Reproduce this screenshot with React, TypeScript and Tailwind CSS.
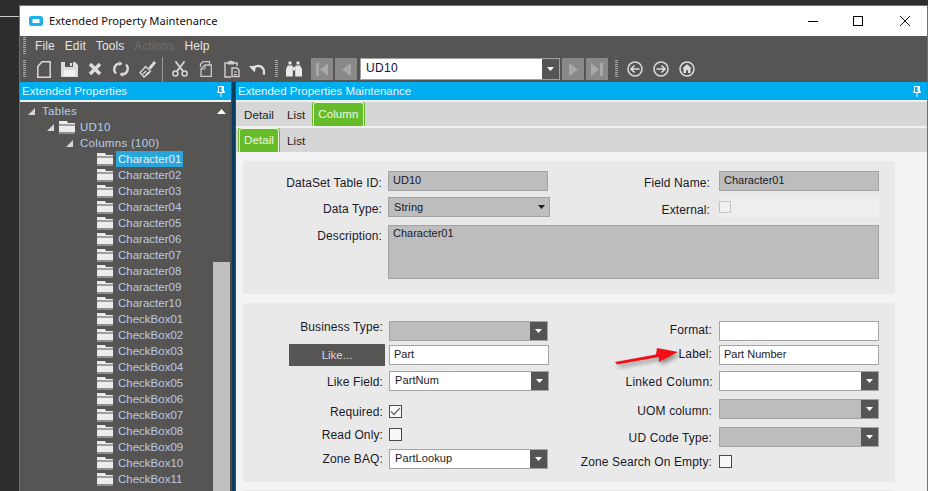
import type { ReactNode } from "react";

const treeItems = [
  "Character02", "Character03", "Character04", "Character05", "Character06",
  "Character07", "Character08", "Character09", "Character10", "CheckBox01",
  "CheckBox02", "CheckBox03", "CheckBox04", "CheckBox05", "CheckBox06",
  "CheckBox07", "CheckBox08", "CheckBox09", "CheckBox10", "CheckBox11",
];

const Grip = () => (
  <div className="w-[3px] h-[18px] bg-[repeating-linear-gradient(to_bottom,#a8a8a6_0,#a8a8a6_1px,transparent_1px,transparent_2px)]" />
);

const Folder = () => (
  <svg width="16" height="13" viewBox="0 0 16 13" className="shrink-0">
    <path d="M0 0h8l1 2h7v1.5H0z" fill="#ececec" />
    <path d="M0 4.5h16V11H0z" fill="#ececec" />
    <path d="M0 11h16v2H0z" fill="#8f8f8d" />
  </svg>
);

const Expander = () => (
  <svg width="7" height="7" viewBox="0 0 7 7" className="shrink-0">
    <path d="M7 0v7H0z" fill="#d6d6d6" />
  </svg>
);

const Pin = () => (
  <svg width="8" height="11" viewBox="0 0 8 11">
    <path d="M1.5 0.5h5v5h1v1h-7v-1h1z" fill="none" stroke="#fff" />
    <path d="M4.5 0.5h2v5h-2z" fill="#fff" />
    <path d="M3.5 7h1v4h-1z" fill="#fff" />
  </svg>
);

const Caret = ({ color = "#fff" }: { color?: string }) => (
  <svg width="7" height="4" viewBox="0 0 7 4">
    <path d="M0 0h7L3.5 4z" fill={color} />
  </svg>
);

const DropButton = () => (
  <div className="w-[17px] self-stretch bg-[#575553] flex items-center justify-center shrink-0">
    <Caret />
  </div>
);

const NavSquare = ({ children }: { children: ReactNode }) => (
  <div className="w-[22px] h-[22px] bg-[#8a8987] flex items-center justify-center">{children}</div>
);

const Toolbar = () => (
  <div className="h-[26px] flex items-center pl-[3px]">
    <Grip />
    <svg className="ml-[11px]" width="14" height="17" viewBox="0 0 14 17">
      <path d="M5 0.8H13.2V16.2H0.8V5.5z" fill="none" stroke="#d8d8d8" strokeWidth="1.5" />
    </svg>
    <svg className="ml-[10px]" width="17" height="16" viewBox="0 0 17 16">
      <path d="M0 1h14l3 3v12H0z" fill="#dcdcdc" />
      <path d="M4 1h8v5H4z" fill="#575553" />
      <path d="M9 2h2v3H9z" fill="#dcdcdc" />
      <path d="M3 9h11v6H3z" fill="#f2f2f2" />
    </svg>
    <svg className="ml-[10px]" width="14" height="14" viewBox="0 0 14 14">
      <path d="M2 2l10 10M12 2L2 12" stroke="#dcdcdc" strokeWidth="3.6" />
    </svg>
    <svg className="ml-[11px]" width="16" height="16" viewBox="0 0 16 16" fill="none" stroke="#dcdcdc" strokeWidth="2.4">
      <path d="M3 12.5A6 6 0 0 1 6 2.4" />
      <path d="M13 3.5A6 6 0 0 1 10 13.6" />
      <path d="M6.5 0l3 3-3.5 2zM9.5 16l-3-3 3.5-2z" fill="#dcdcdc" stroke="none" />
    </svg>
    <svg className="ml-[10px]" width="17" height="17" viewBox="0 0 17 17" fill="none" stroke="#dcdcdc" strokeWidth="1.3">
      <path d="M10 7l5-6 1.2 1-5 6" fill="#dcdcdc" />
      <path d="M6.5 5.5L11.5 10l-1.5 2-5 4-4-4.5 3.5-3.5z" />
      <path d="M4 13l3-3M6.5 14.5l3-3.5" />
    </svg>
    <div className="ml-[6px] mr-[9px] w-px h-[25px] bg-[#9a9997]" />
    <svg width="16" height="16" viewBox="0 0 16 16" fill="none" stroke="#d4d4d4" strokeWidth="1.5">
      <circle cx="3.4" cy="12.4" r="2.5" />
      <circle cx="12.6" cy="12.4" r="2.5" />
      <path d="M4.8 10.4L12.5 0.5M11.2 10.4L3.5 0.5" strokeWidth="1.8" />
    </svg>
    <svg className="ml-[10px]" width="14" height="16" viewBox="0 0 14 16" fill="none" stroke="#c8c8c8" strokeWidth="1.3">
      <path d="M2.5 6V3.2L5 0.7h6.5V4" />
      <path d="M7 4h6.3v11.3H3V8z" />
      <path d="M7 4.2V8H3.2" strokeWidth="1" />
    </svg>
    <svg className="ml-[12px]" width="16" height="18" viewBox="0 0 16 18" fill="none" stroke="#d0d0d0" strokeWidth="1.4">
      <path d="M4 3H1v14h6" />
      <path d="M10 3h3v3" />
      <path d="M4 1.2h2l.5-.7h1l.5.7h2V4.5H4z" fill="#d0d0d0" stroke="none" />
      <path d="M8 8h5l2 2v6.5H8z" fill="#575553" />
      <path d="M10 12h3M10 14.5h3" strokeWidth="1.2" />
    </svg>
    <svg className="ml-[9px]" width="16" height="13" viewBox="0 0 16 13" fill="none" stroke="#e0e0e0" strokeWidth="2.4">
      <path d="M3.5 6.5A6 6 0 0 1 14.6 11.5" />
      <path d="M0 3l7 0-1.2 6.5z" fill="#e0e0e0" stroke="none" />
    </svg>
    <div className="ml-[10px]"><Grip /></div>
    <svg className="ml-[8px]" width="16" height="16" viewBox="0 0 16 16" fill="#e8e8e8">
      <path d="M2.5 0.5h3v3h-3zM10.5 0.5h3v3h-3z" />
      <path d="M1.8 4.5h5V15.5H0V8zM9.2 4.5h5L16 8v7.5H9.2z" />
      <path d="M7 6h2v3.5H7z" />
    </svg>
    <div className="ml-[9px] flex gap-[2px]">
      <NavSquare>
        <svg width="12" height="13" viewBox="0 0 12 13"><path d="M0 0h3v13H0zM12 0v13L4 6.5z" fill="#a9a8a6" /></svg>
      </NavSquare>
      <NavSquare>
        <svg width="9" height="13" viewBox="0 0 9 13"><path d="M9 0v13L0 6.5z" fill="#a9a8a6" /></svg>
      </NavSquare>
    </div>
    <div className="ml-[3px] w-[200px] h-[22px] bg-white border border-[#a0a0a0] flex items-stretch">
      <div className="flex-1 pl-[5px] text-[12px] leading-[19px] tracking-[0.3px] text-[#101040]">UD10</div>
      <DropButton />
    </div>
    <div className="ml-[2px] flex gap-[2px]">
      <NavSquare>
        <svg width="9" height="13" viewBox="0 0 9 13"><path d="M0 0v13l9-6.5z" fill="#a9a8a6" /></svg>
      </NavSquare>
      <NavSquare>
        <svg width="12" height="13" viewBox="0 0 12 13"><path d="M9 0h3v13H9zM0 0v13l8-6.5z" fill="#a9a8a6" /></svg>
      </NavSquare>
    </div>
    <div className="ml-[7px]"><Grip /></div>
    <svg className="ml-[9px]" width="16" height="16" viewBox="0 0 16 16" fill="none" stroke="#dedede" strokeWidth="1.5">
      <circle cx="8" cy="8" r="7" />
      <path d="M7.5 4.5L4 8l3.5 3.5M4 8h8.5" />
    </svg>
    <svg className="ml-[10px]" width="16" height="16" viewBox="0 0 16 16" fill="none" stroke="#dedede" strokeWidth="1.5">
      <circle cx="8" cy="8" r="7" />
      <path d="M8.5 4.5L12 8l-3.5 3.5M12 8H3.5" />
    </svg>
    <svg className="ml-[10px]" width="16" height="16" viewBox="0 0 16 16">
      <circle cx="8" cy="8" r="7" fill="none" stroke="#dedede" strokeWidth="1.5" />
      <path d="M8 3.2L12.8 7.6h-1.3V12H9V9.2H7V12H4.5V7.6H3.2z" fill="#dedede" />
    </svg>
  </div>
);

const Sidebar = () => (
  <aside className="w-[211px] shrink-0 flex flex-col bg-[#575553]">
    <div className="h-[18px] bg-[#00adef] flex items-center justify-between pl-[2px] pr-[6px] text-[11.5px] tracking-[0.05px] text-[#e8f6fd]">
      <span className="mt-[2px]">Extended Properties</span>
      <Pin />
    </div>
    <div className="h-[2px] bg-[#f0f0f0]" />
    <div className="flex-1 flex min-h-0">
      <div className="w-[193px] pt-px text-[11.5px] leading-[16px] text-[#b8cbe6] overflow-hidden">
        <div className="h-4 flex items-center pl-[8px] gap-[7px]"><Expander /><span className="tracking-[0.3px]">Tables</span></div>
        <div className="h-4 flex items-center pl-[27px] gap-[5px]"><Expander /><Folder /><span className="tracking-[0.3px]">UD10</span></div>
        <div className="h-4 flex items-center pl-[46px] gap-[7px]"><Expander /><span className="tracking-[0.3px]">Columns (100)</span></div>
        <div className="h-4 flex items-center pl-[77px] gap-[3px]">
          <Folder />
          <span className="bg-[#29a5dc] text-[#e6f4fb] px-[2px]">Character01</span>
        </div>
        {treeItems.map((t) => (
          <div key={t} className="h-4 flex items-center pl-[77px] gap-[5px]">
            <Folder />
            <span>{t}</span>
          </div>
        ))}
      </div>
      <div className="w-[17px] flex flex-col">
        <div className="h-[160px] pt-[7px] flex justify-center">
          <svg width="9" height="5" viewBox="0 0 9 5"><path d="M4.5 0L9 5H0z" fill="#fff" /></svg>
        </div>
        <div className="flex-1 bg-[#bfbfbf]" />
      </div>
      <div className="w-px bg-[#4a4a48]" />
    </div>
  </aside>
);

const Tab = ({ label, active }: { label: string; active?: boolean }) =>
  active ? (
    <div className="h-[24px] px-[4px] rounded-t-[3px] bg-[#67bd29] border border-b-0 border-[#eef8e6] ring-1 ring-[#67bd29] text-[#eef8e6] text-[11.5px] leading-[22px] tracking-[0.1px]">
      {label}
    </div>
  ) : (
    <div className="h-[25px] px-[5px] pt-[4px] text-[11.5px] leading-[21px] tracking-[0.1px] text-[#1c1c1c]">{label}</div>
  );

const Label = ({ children, w }: { children: ReactNode; w: string }) => (
  <div className={`${w} text-right text-[12px] leading-[14px] tracking-[0.12px] text-[#1a1a2a] shrink-0`}>{children}</div>
);

const Input = ({ text, className }: { text?: string; className: string }) => (
  <div className={`${className} h-5 border border-[#a3a3a3] pl-[4px] text-[11px] leading-[17px] text-[#1a1a2a] flex items-stretch justify-between`}>
    <span>{text}</span>
  </div>
);

const Combo = ({ text, className }: { text?: string; className: string }) => (
  <div className={`${className} h-5 border border-[#a3a3a3] pl-[5px] text-[11px] leading-[17px] tracking-[0.1px] text-[#1a1a2a] flex items-stretch justify-between`}>
    <span>{text}</span>
    <DropButton />
  </div>
);

const CheckBox = ({ checked }: { checked?: boolean }) => (
  <div className="w-[13px] h-[13px] border border-[#4a4a4a] bg-[#f8f8f8] flex items-center justify-center">
    {checked && (
      <svg width="11" height="9" viewBox="0 0 11 9">
        <path d="M1 4.5L4 7.5 10 1" fill="none" stroke="#6a6a6a" strokeWidth="1.3" />
      </svg>
    )}
  </div>
);

const Arrow = () => (
  <svg
    className="absolute left-[66px] top-[3px] overflow-visible drop-shadow-[2px_3px_2px_rgba(0,0,0,0.4)]"
    width="63"
    height="17"
    viewBox="0 0 63 17"
  >
    <path d="M0 14L41 6.5 42 0 63 4 44 14 44 9 2 16.5z" fill="#f40f17" />
  </svg>
);

const Main = () => (
  <main className="flex-1 min-w-0 flex flex-col bg-[#f3f3f6]">
    <div className="h-[18px] bg-[#00adef] flex items-center justify-between pl-[2px] pr-[6px] text-[11.5px] text-[#e8f6fd]">
      <span className="mt-[2px]">Extended Properties Maintenance</span>
      <Pin />
    </div>
    <div className="h-[2px] bg-[#f0f0f0]" />
    <div className="h-[24px] bg-[#d6d6d6] flex items-end pl-[3px] overflow-hidden">
      <Tab label="Detail" />
      <div className="ml-[3px]"><Tab label="List" /></div>
      <div className="ml-[3px] self-end"><Tab label="Column" active /></div>
    </div>
    <div className="h-[2px] bg-[#f0f0f0]" />
    <div className="h-[24px] bg-[#d6d6d6] flex items-end pl-[3px] overflow-hidden">
      <Tab label="Detail" active />
      <div className="ml-[3px]"><Tab label="List" /></div>
    </div>

    <section className="mt-[9px] ml-[7px] w-[652px] h-[133px] bg-[#e9e9e9] rounded-[3px] pt-[10px]">
      <div className="flex h-5 items-center">
        <Label w="w-[139px]"><span className="block mt-[4px]">DataSet Table ID:</span></Label>
        <Input text="UD10" className="ml-[6px] w-[160px] bg-[#bdbdbd]" />
        <Label w="w-[162px]"><span className="block mt-[4px]">Field Name:</span></Label>
        <Input text="Character01" className="ml-[9px] w-[160px] bg-[#bdbdbd]" />
      </div>
      <div className="mt-[6px] flex h-5 items-center">
        <Label w="w-[139px]"><span className="block mt-[4px]">Data Type:</span></Label>
        <div className="ml-[6px] w-[162px] h-5 border border-[#a3a3a3] bg-[#bdbdbd] pl-[5px] pr-[4px] text-[11px] tracking-[0.1px] leading-[16px] text-[#1a1a2a] flex items-center justify-between">
          <span>String</span>
          <Caret color="#1a1a2a" />
        </div>
        <Label w="w-[160px]"><span className="block mt-[6px]">External:</span></Label>
        <div className="ml-[9px] w-[160px] h-5 bg-[#eeeeee] flex items-center">
          <div className="w-[12px] h-[12px] border border-[#c4c4c4] bg-[#f0f0f0]" />
        </div>
      </div>
      <div className="mt-[8px] flex">
        <Label w="w-[139px]"><span className="block mt-[4px]">Description:</span></Label>
        <div className="ml-[6px] w-[491px] h-[54px] border border-[#a3a3a3] bg-[#bdbdbd] pl-[4px] text-[11px] leading-[14px] text-[#1a1a2a]">
          Character01
        </div>
      </div>
    </section>

    <section className="mt-[9px] ml-[7px] w-[652px] h-[179px] bg-[#e9e9e9] rounded-[3px] pt-[18px] flex">
      <div className="w-[306px]">
        <div className="flex h-5 items-center">
          <Label w="w-[140px]"><span className="block -mt-[8px]">Business Type:</span></Label>
          <Combo className="ml-[6px] w-[159px] bg-[#bdbdbd] pr-0" />
        </div>
        <div className="mt-[4px] flex h-5 items-center">
          <div className="ml-[46px] w-[96px] h-[22px] bg-[#575553] text-center text-[11.5px] leading-[22px] text-[#d8d8d8]">Like...</div>
          <Input text="Part" className="ml-[4px] w-[160px] bg-white" />
        </div>
        <div className="mt-[6px] flex h-5 items-center">
          <Label w="w-[140px]"><span className="block mt-[2px]">Like Field:</span></Label>
          <Combo text="PartNum" className="ml-[6px] w-[162px] bg-white" />
        </div>
        <div className="mt-[14px] flex h-[13px] items-center">
          <Label w="w-[140px]">Required:</Label>
          <div className="ml-[6px]"><CheckBox checked /></div>
        </div>
        <div className="mt-[10px] flex h-[13px] items-center">
          <Label w="w-[140px]">Read Only:</Label>
          <div className="ml-[6px]"><CheckBox /></div>
        </div>
        <div className="mt-[8px] flex h-5 items-center">
          <Label w="w-[140px]">Zone BAQ:</Label>
          <Combo text="PartLookup" className="ml-[6px] w-[159px] bg-white" />
        </div>
      </div>
      <div className="flex-1">
        <div className="flex h-5 items-center">
          <Label w="w-[163px]"><span className="block -mt-[2px]">Format:</span></Label>
          <Input className="ml-[7px] w-[160px] bg-white" />
        </div>
        <div className="mt-[4px] flex h-5 items-center relative">
          <Label w="w-[163px]"><span className="block -mt-[3px]">Label:</span></Label>
          <Input text="Part Number" className="ml-[7px] w-[160px] bg-white" />
          <Arrow />
        </div>
        <div className="mt-[6px] flex h-5 items-center">
          <Label w="w-[164px]"><span className="block mt-[2px] tracking-[0.3px]">Linked Column:</span></Label>
          <Combo className="ml-[6px] w-[160px] bg-white" />
        </div>
        <div className="mt-[8px] flex h-5 items-center">
          <Label w="w-[163px]"><span className="block mt-[4px]">UOM column:</span></Label>
          <Combo className="ml-[7px] w-[160px] bg-[#bdbdbd]" />
        </div>
        <div className="mt-[8px] flex h-5 items-center">
          <Label w="w-[163px]"><span className="block mt-[2px]">UD Code Type:</span></Label>
          <Combo className="ml-[7px] w-[160px] bg-[#bdbdbd]" />
        </div>
        <div className="mt-[8px] flex h-[13px] items-center">
          <Label w="w-[163px]">Zone Search On Empty:</Label>
          <div className="ml-[7px]"><CheckBox /></div>
        </div>
      </div>
    </section>
    <div className="mt-[8px] ml-[7px] w-[652px] h-px bg-[#e9e9e9]" />
  </main>
);

export default function App() {
  return (
    <div className="w-[928px] h-[491px] flex overflow-hidden bg-[#2d2d2d] font-['Liberation_Sans',Arial,sans-serif]">
      <div className="w-[19px] shrink-0">
        <div className="mt-[16px] h-px bg-[#c8c8c8]" />
      </div>
      <div className="flex-1 min-w-0 flex flex-col pt-[5px]">
        <div className="flex-1 min-h-0 flex flex-col border-t border-x border-[#2f83c4]">
          <header className="h-[30px] bg-white flex items-center pl-[9px] shrink-0">
            <svg width="14" height="10" viewBox="0 0 14 10">
              <rect x="0" y="0" width="14" height="10" rx="2.5" fill="#1cb1e8" />
              <rect x="3.5" y="3" width="7" height="4" rx="0.5" fill="#fff" />
            </svg>
            <span className="ml-[6px] text-[11.15px] text-[#111] font-['Noto_Sans',sans-serif]">Extended Property Maintenance</span>
            <div className="ml-auto flex items-center">
              <div className="w-[10px] h-px bg-black mr-[35px]" />
              <div className="w-[10px] h-[10px] border border-black mr-[37px]" />
              <svg className="mr-[17px]" width="10" height="10" viewBox="0 0 10 10">
                <path d="M0 0l10 10M10 0L0 10" stroke="#111" strokeWidth="1" fill="none" />
              </svg>
            </div>
          </header>
          <div className="shrink-0 bg-[#575553]">
            <div className="h-[20px] flex items-center pl-[3px]">
              <Grip />
              <div className="ml-[9px] flex gap-[10px] text-[12px] tracking-[0.1px] text-[#e4e4e4]">
                <span>File</span>
                <span>Edit</span>
                <span>Tools</span>
                <span className="text-[#6f6e6c]">Actions</span>
                <span>Help</span>
              </div>
            </div>
            <Toolbar />
          </div>
          <div className="flex-1 min-h-0 flex">
            <Sidebar />
            <div className="w-[1px] bg-[#4a4a48]" />
            <div className="w-[3px] bg-[#0b3d5e]" />
            <div className="w-[1px] bg-[#4a4a48]" />
            <Main />
          </div>
        </div>
      </div>
    </div>
  );
}
